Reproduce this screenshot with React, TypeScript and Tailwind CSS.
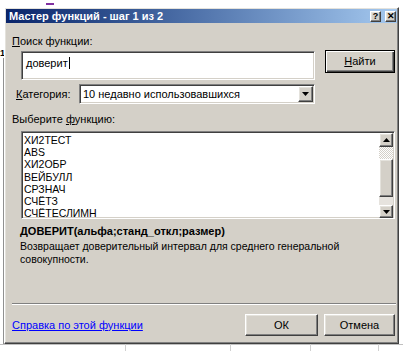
import React from 'react';

const raised =
  'border border-t-white border-l-white border-r-[#404040] border-b-[#404040] shadow-[inset_-1px_-1px_#808080,inset_1px_1px_#e4e2dc]';
const sunken =
  'border border-t-[#808080] border-l-[#808080] border-r-white border-b-white shadow-[inset_1px_1px_#404040,inset_-1px_-1px_#d4d0c8]';

const functions = ['ХИ2ТЕСТ', 'ABS', 'ХИ2ОБР', 'ВЕЙБУЛЛ', 'СРЗНАЧ', 'СЧЁТЗ', 'СЧЁТЕСЛИМН'];

const Arrow: React.FC<{ down?: boolean }> = ({ down }) => (
  <svg width="7" height="4" viewBox="0 0 7 4">
    {down ? <path d="M0 0h7L3.5 4z" fill="#000" /> : <path d="M0 4h7L3.5 0z" fill="#000" />}
  </svg>
);

export default function App() {
  return (
    <div className="relative w-[403px] h-[351px] overflow-hidden bg-white pt-[7px] pl-[4px] text-[11px] text-black font-['Liberation_Sans',Arial,sans-serif]">
      {/* spreadsheet behind the dialog */}
      <div className="absolute left-[46px] top-0 h-[5px] w-[8px] border-b-2 border-[#8030a0]" />
      <div className="absolute left-0 top-[49px] text-[9px] font-bold leading-none">1</div>
      <div className="absolute left-[3px] top-[58px] h-[287px] w-px bg-[#909090]" />
      <div className="absolute left-0 top-[344px] h-px w-[403px] bg-[#c0c0c0]" />
      <div className="absolute left-[125px] top-[344px] h-[8px] w-px bg-[#d0d0d0]" />
      <div className="absolute left-[230px] top-[344px] h-[8px] w-px bg-[#d0d0d0]" />
      <div className="absolute left-[310px] top-[344px] h-[8px] w-px bg-[#d0d0d0]" />
      <div className="absolute left-[378px] top-[344px] h-[8px] w-px bg-[#d0d0d0]" />

      {/* dialog window */}
      <div className={`relative flex h-[337px] w-[395px] flex-col bg-[#d4d0c8] p-px ${raised}`}>
        {/* title bar */}
        <div className="flex h-[14px] items-center bg-gradient-to-r from-[#0a246a] to-[#a6caf0] pl-[3px] pr-[1px]">
          <span className="flex-1 text-[11px] font-bold leading-none text-white">Мастер функций - шаг 1 из 2</span>
          <button className={`mr-[4px] flex h-[11px] w-[11px] items-center justify-center bg-[#d4d0c8] text-[9px] font-bold leading-none ${raised}`}>?</button>
          <button className={`flex h-[11px] w-[11px] items-center justify-center bg-[#d4d0c8] text-[9px] font-bold leading-none ${raised}`}>✕</button>
        </div>

        {/* search */}
        <div className="ml-[6px] mt-[12px] h-[13px] leading-[13px]">
          <span className="underline">П</span>оиск функции:
        </div>
        <div className="mt-[2px] flex items-start">
          <div className={`ml-[15px] mt-[1px] h-[29px] w-[294px] bg-white px-[4px] pt-[3px] leading-[13px] ${sunken}`}>
            доверит<span className="ml-px inline-block h-[12px] w-px translate-y-[2px] bg-black" />
          </div>
          <button className="ml-[10px] flex h-[23px] w-[70px] items-center justify-center border border-black bg-[#d4d0c8] shadow-[inset_1px_1px_white,inset_-1px_-1px_#404040,inset_-2px_-2px_#808080]">
            <span className="underline">Н</span>айти
          </button>
        </div>

        {/* category */}
        <div className="mt-[4px] flex h-[20px] items-center">
          <span className="ml-[10px] w-[63px]">
            <span className="underline">К</span>атегория:
          </span>
          <div className={`flex h-[20px] w-[236px] items-center bg-white pl-[3px] ${sunken}`}>
            <span className="flex-1 leading-none">10 недавно использовавшихся</span>
            <div className={`mr-[1px] flex h-[16px] w-[15px] items-center justify-center bg-[#d4d0c8] ${raised}`}>
              <Arrow down />
            </div>
          </div>
        </div>

        {/* function list */}
        <div className="ml-[6px] mt-[9px] h-[13px] leading-[13px]">
          Выберите <span className="underline">ф</span>ункцию:
        </div>
        <div className={`ml-[15px] mt-[5px] flex h-[88px] w-[374px] bg-white ${sunken}`}>
          <div className="flex-1 overflow-hidden pl-[2px] pt-[2px]">
            {functions.map((f) => (
              <div key={f} className="h-[12.2px] text-[10.5px] leading-[12px]">
                {f}
              </div>
            ))}
          </div>
          <div className="mr-[1px] mt-[1px] flex h-[85px] w-[14px] flex-col bg-[#ece9e4]">
            <div className={`flex h-[14px] items-center justify-center bg-[#d4d0c8] ${raised}`}>
              <Arrow />
            </div>
            <div className="h-[12px] bg-[repeating-conic-gradient(#ffffff_0_25%,#d4d0c8_0_50%)] bg-[length:2px_2px]" />
            <div className={`h-[38px] bg-[#d4d0c8] ${raised}`} />
            <div className="flex-1 bg-[#e6e3de]" />
            <div className={`flex h-[13px] items-center justify-center bg-[#d4d0c8] ${raised}`}>
              <Arrow down />
            </div>
          </div>
        </div>

        {/* description */}
        <div className="ml-[14px] mt-[6px] h-[13px] text-[11px] font-bold leading-[13px]">
          ДОВЕРИТ(альфа;станд_откл;размер)
        </div>
        <div className="ml-[14px] mt-[2px] text-[10.5px] leading-[13px]">
          Возвращает доверительный интервал для среднего генеральной
          <br />
          совокупности.
        </div>

        <div className="flex-1" />

        {/* separator */}
        <div className="ml-[6px] h-[2px] w-[384px] border-t border-b border-t-[#808080] border-b-white" />

        {/* bottom buttons */}
        <div className="mb-[6px] mt-[9px] flex h-[22px] items-center">
          <a className="ml-[6px] flex-1 text-[#0000ff] underline">Справка по этой функции</a>
          <button className={`flex h-[22px] w-[73px] items-center justify-center bg-[#d4d0c8] ${raised}`}>ОК</button>
          <button className={`ml-[6px] mr-[2px] flex h-[22px] w-[71px] items-center justify-center bg-[#d4d0c8] ${raised}`}>
            Отмена
          </button>
        </div>
      </div>
    </div>
  );
}
